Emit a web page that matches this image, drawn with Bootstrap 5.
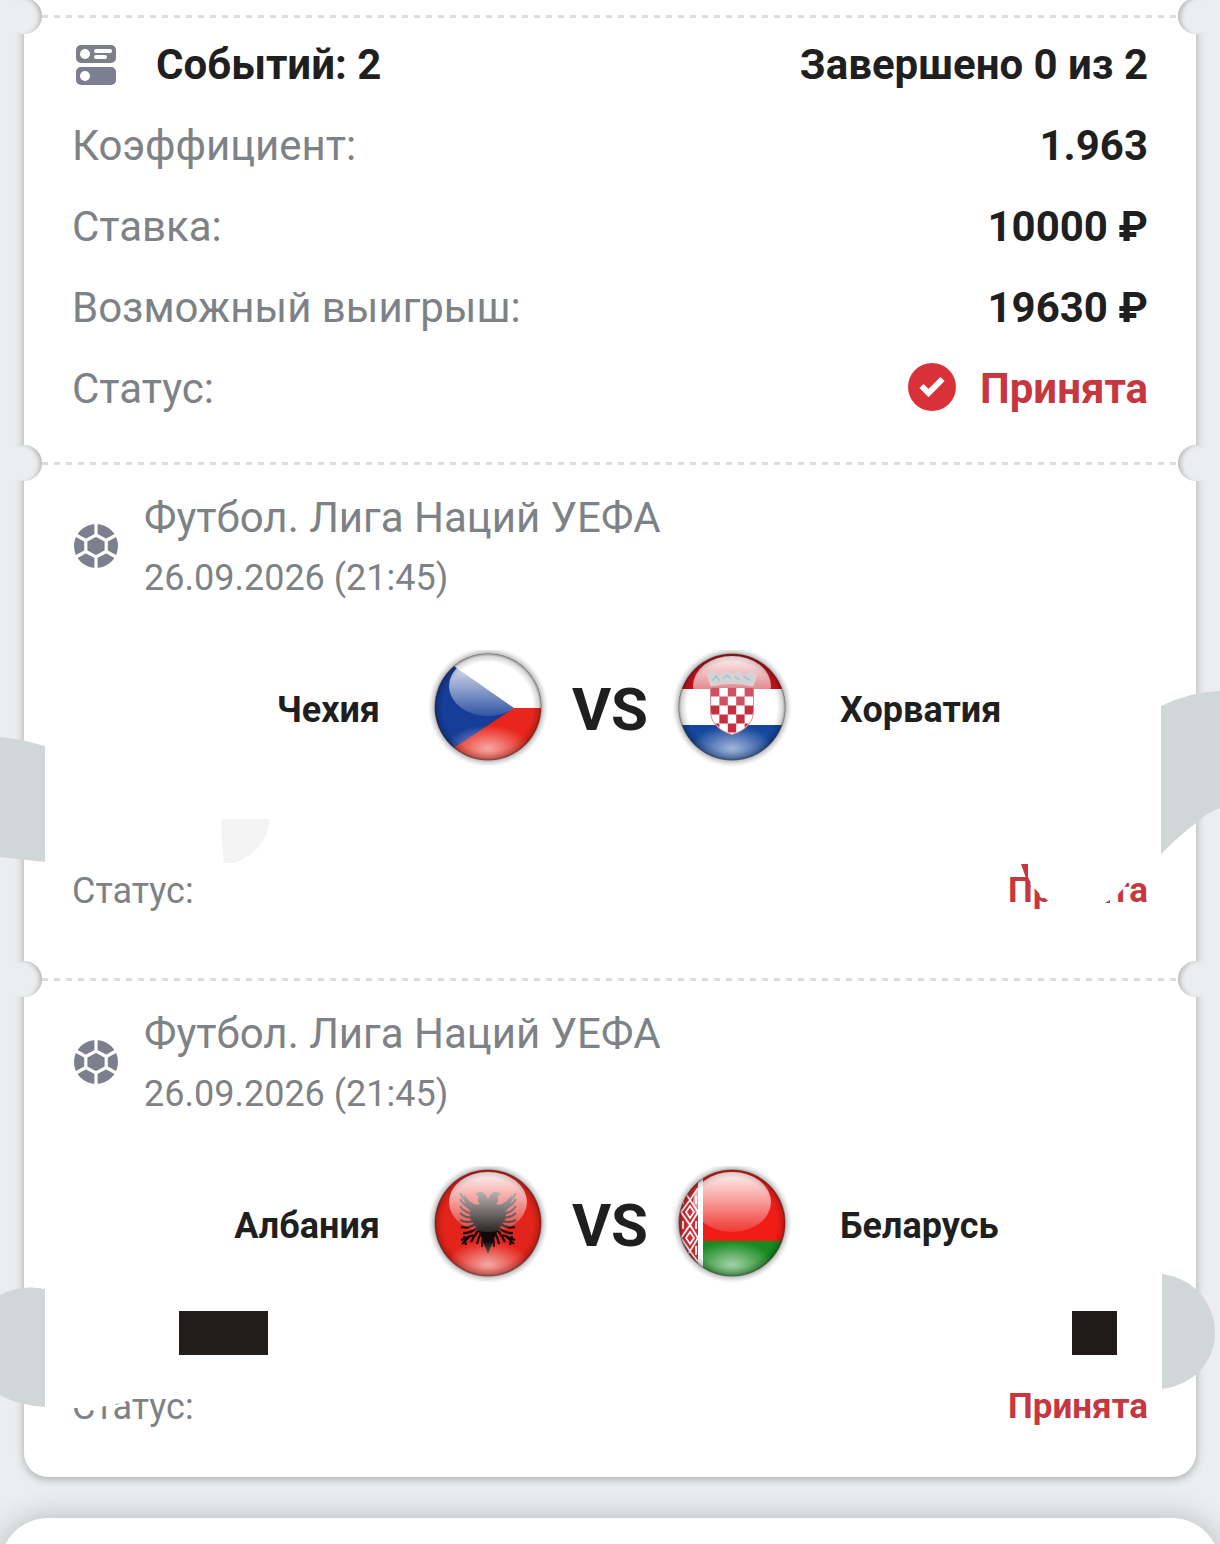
<!DOCTYPE html>
<html lang="ru">
<head>
<meta charset="utf-8">
<meta name="viewport" content="width=device-width, initial-scale=1">
<title>Купон</title>
<link href="https://cdn.jsdelivr.net/npm/bootstrap@5.3.0/dist/css/bootstrap.min.css" rel="stylesheet">
<style>
  body { background: #ebedee; font-family: Roboto, "Noto Sans", sans-serif; font-size: 42px; color: #1f1f1f; }
  .coupon { margin: 0 24px; padding-top: 15px; background: #fff; border-radius: 0 0 24px 24px; box-shadow: 0 2px 8px rgba(60, 66, 70, .4); }
  .tear { position: relative; height: 3px; margin: 0 18px 0 18px; background: repeating-linear-gradient(90deg, #dcdcdc 0 6px, transparent 6px 12px); }
  .tear::before, .tear::after { content: ""; position: absolute; top: -17px; width: 36px; height: 36px; border-radius: 50%; background: #ebedee; }
  .tear::before { left: -36px; box-shadow: inset -5px 1px 5px -3px rgba(0, 0, 0, .25); }
  .tear::after { right: -36px; box-shadow: inset 5px 1px 5px -3px rgba(0, 0, 0, .25); }
  .block { padding: 0 48px; }
  .totals { padding-top: 6px; padding-bottom: 33px; }
  .line { line-height: 81px; }
  .event { position: relative; padding-top: 23px; padding-bottom: 57px; }
  .event:last-child { padding-bottom: 40px; }
  .muted { color: #7d8286; }
  .accepted { color: #c6373f; }
  .sum-icon { margin-right: 36px; }
  .league, .when { line-height: 60px; }
  .when, .side, .state { font-size: 36px; }
  .state .accepted { font-size: 35px; }
  .match { margin-top: 42px; gap: 48px; line-height: 60px; }
  .side { flex: 1 1 0; }
  .versus { width: 124px; font-size: 60px; }
  .state { margin-top: 91px; line-height: 60px; }
  .stain { position: absolute; pointer-events: none; }
  .stain-left { left: -24px; top: 223px; }
  .stain-right { right: -24px; top: 223px; }
  .next { flex: 1 0 67px; height: 67px; padding-top: 41px; overflow: hidden; }
  .sheet { height: 120px; background: #fff; border-radius: 48px 48px 0 0; box-shadow: 0 0 28px rgba(60, 66, 70, .3); }
</style>
<script src="https://cdn.jsdelivr.net/npm/bootstrap@5.3.0/dist/js/bootstrap.bundle.min.js"></script>
</head>
<body class="d-flex flex-column min-vh-100">

<svg width="0" height="0" class="position-absolute" aria-hidden="true">
  <defs>
    <radialGradient id="halo"><stop offset=".84" stop-color="#555" stop-opacity=".75"/><stop offset=".93" stop-color="#888" stop-opacity=".3"/><stop offset="1" stop-color="#aaa" stop-opacity="0"/></radialGradient>
    <radialGradient id="rim"><stop offset=".84" stop-color="#000" stop-opacity="0"/><stop offset=".95" stop-color="#000" stop-opacity=".16"/><stop offset="1" stop-color="#000" stop-opacity=".45"/></radialGradient>
    <linearGradient id="gloss" x1="0" y1="0" x2="0" y2="1"><stop offset="0" stop-color="#fff" stop-opacity=".95"/><stop offset=".5" stop-color="#fff" stop-opacity=".55"/><stop offset="1" stop-color="#fff" stop-opacity=".12"/></linearGradient>
    <radialGradient id="glow" cx=".5" cy=".55" r=".5"><stop offset="0" stop-color="#fff" stop-opacity=".6"/><stop offset="1" stop-color="#fff" stop-opacity="0"/></radialGradient>
    <clipPath id="disc"><circle cx="60" cy="57" r="53"/></clipPath>
    <g id="shine">
      <ellipse cx="60" cy="96" rx="42" ry="23" fill="url(#glow)" clip-path="url(#disc)"/>
      <ellipse cx="60" cy="36" rx="39" ry="30" fill="url(#gloss)"/>
      <circle cx="60" cy="57" r="53.500" fill="url(#rim)"/>
    </g>
    <g id="ball">
      <circle cx="24" cy="24" r="22" fill="#7c808c"/>
      <g fill="none" stroke="#fff" stroke-width="3.200">
        <path d="M24 13l10.200 5.500v11L24 35l-10.200-5.500v-11z"/>
        <path d="M24 13V1M34.200 18.500L46 12M34.200 29.500L46 36M24 35V47M13.800 29.500L2 36M13.800 18.500L2 12"/>
      </g>
    </g>
    <g id="wing">
      <path d="M60 36 C59 30 57 27 53 26 C50 26 49 28 47 28 L51 30 C50 34 50 36 52 38 C49 40 46 39 43 36 L42 52 L49 62 L53 70 L57 80 L60 87z"/>
      <path fill="none" stroke-width="2.200" d="M48 40Q37 37 32 27M48 44Q37 42 32 33M48 48Q37 48 32 40M48 51Q38 53 32 47M49 54Q39 58 32 54M49 57Q41 63 33 61M51 60Q43 68 35 67M52 62Q46 70 43 76M54 65Q50 72 49 78M56 68Q54 76 54 81M33 74l12-5M36 70l2 9M34 78l8-8"/>
      <path d="M42 36l-6-7 1 8 5 8z"/>
    </g>
  </defs>
</svg>

<main class="coupon">
  <div class="tear"></div>

  <section class="block totals">
    <div class="line d-flex align-items-center justify-content-between fw-bold">
      <span class="d-flex align-items-center">
        <svg class="sum-icon" width="48" height="48" viewBox="0 0 48 48" aria-hidden="true">
          <rect x="4" y="4" width="40" height="18" rx="5" fill="#7c8088"/><rect x="4" y="26" width="40" height="18" rx="5" fill="#7b7f91"/>
          <g fill="#fff"><circle cx="13" cy="13" r="5"/><circle cx="13" cy="35" r="5"/><rect x="22" y="8" width="18" height="4" rx="2"/><rect x="22" y="14" width="13" height="4" rx="2"/></g>
        </svg>
        <span>Событий: 2</span>
      </span>
      <span>Завершено 0 из 2</span>
    </div>
    <div class="line d-flex justify-content-between"><span class="muted">Коэффициент:</span><span class="fw-bold">1.963</span></div>
    <div class="line d-flex justify-content-between"><span class="muted">Ставка:</span><span class="fw-bold">10000 ₽</span></div>
    <div class="line d-flex justify-content-between"><span class="muted">Возможный выигрыш:</span><span class="fw-bold">19630 ₽</span></div>
    <div class="line d-flex justify-content-between"><span class="muted">Статус:</span>
      <span class="accepted fw-bold d-flex align-items-center gap-4">
        <svg width="48" height="52" viewBox="0 0 48 52" aria-hidden="true"><circle cx="24" cy="24" r="24" fill="#d83138"/><path d="M13.500 23l7 7L34.500 16" fill="none" stroke="#fff" stroke-width="6"/></svg>
        <span>Принята</span>
      </span>
    </div>
  </section>

  <div class="tear"></div>

  <section class="block event">
    <div class="d-flex align-items-center gap-4 muted">
      <svg class="mb-1" width="48" height="48" viewBox="0 0 48 48" aria-hidden="true"><use href="#ball"/></svg>
      <div><div class="league">Футбол. Лига Наций УЕФА</div><div class="when">26.09.2026 (21:45)</div></div>
    </div>
    <div class="match d-flex align-items-center fw-bold">
      <div class="side text-end">Чехия</div>
      <div class="d-flex align-items-center">
        <svg width="120" height="120" viewBox="0 0 120 120" role="img" aria-label="Чехия">
          <circle cx="60" cy="57" r="60" fill="url(#halo)"/>
          <g clip-path="url(#disc)"><path fill="#fff" d="M0 0h120v58H0z"/><path fill="#e8261c" d="M0 58h120v62H0z"/><path fill="#163d97" d="M0-2l86 60L0 115z"/></g>
          <use href="#shine"/>
        </svg>
        <div class="versus text-center">VS</div>
        <svg width="120" height="120" viewBox="0 0 120 120" role="img" aria-label="Хорватия">
          <circle cx="60" cy="57" r="60" fill="url(#halo)"/>
          <g clip-path="url(#disc)"><path fill="#c4131c" d="M0 0h120v39H0z"/><path fill="#fff" d="M0 39h120v36H0z"/><path fill="#15479d" d="M0 75h120v45H0z"/></g>
          <use href="#shine"/>
          <path fill="#fff" stroke="#d98a94" d="M38.500 37.500h43V61c0 12-9 20-21.500 23.500C47.500 81 38.500 73 38.500 61z"/>
          <clipPath id="crest"><path d="M39 38h42v23c0 12-9 19-21 23-12-4-21-11-21-23z"/></clipPath>
          <g clip-path="url(#crest)" stroke-width="9" fill="none"><path stroke="#cf5262" stroke-dasharray="8.400 8.400" d="M39 42h42M47.400 51h34"/><path stroke="#c62f40" stroke-dasharray="8.400 8.400" d="M39 60h42M47.400 69h34M39 78h42"/></g>
          <path fill="#d3d3d6" stroke="#ecc9cc" d="M39 36l-4-12 7-3 6 4 6-4 6 3 6-3 6 4 7-4 6 4-4 11q-21-5-42 0z"/>
          <path fill="none" stroke="#a3c6c9" stroke-width="1.500" d="M40 31l4-5 4 5M51 29l4-4 4 4M63 27l5 3M71 26l7 4"/>
        </svg>
      </div>
      <div class="side">Хорватия</div>
    </div>
    <div class="state d-flex justify-content-between"><span class="muted">Статус:</span><span class="accepted fw-bold">Принята</span></div>

    <svg class="stain stain-left" width="280" height="190" viewBox="0 688 280 190" aria-hidden="true">
      <path fill="#d1d6d7" d="M0 737l22 3 23 6v116l-45-5z"/><path fill="#f3f3f3" d="M222 819h47c1 18-14 38-36 44h-10c2-15-3-20-1-44z"/>
    </svg>
    <svg class="stain stain-right" width="220" height="230" viewBox="1000 688 220 230" aria-hidden="true">
      <circle cx="1079" cy="854" r="56" fill="#fff"/>
      <path fill="#c6373f" d="M1021 864h7v14l3 10-5-10z"/>
      <path fill="#d1d6d7" d="M1161 706q28-14 59-15v117q-12 4-24 15-15 11-35 31z"/>
      <path fill="#8a5058" d="M1105 903l5-3v3z"/>
    </svg>
  </section>

  <div class="tear"></div>

  <section class="block event">
    <div class="d-flex align-items-center gap-4 muted">
      <svg class="mb-1" width="48" height="48" viewBox="0 0 48 48" aria-hidden="true"><use href="#ball"/></svg>
      <div><div class="league">Футбол. Лига Наций УЕФА</div><div class="when">26.09.2026 (21:45)</div></div>
    </div>
    <div class="match d-flex align-items-center fw-bold">
      <div class="side text-end">Албания</div>
      <div class="d-flex align-items-center">
        <svg width="120" height="120" viewBox="0 0 120 120" role="img" aria-label="Албания">
          <circle cx="60" cy="57" r="60" fill="url(#halo)"/>
          <circle cx="60" cy="57" r="53" fill="#e3241a"/>
          <g fill="#120808" stroke="#120808" stroke-width=".5"><use href="#wing"/><use href="#wing" transform="matrix(-1 0 0 1 120 0)"/></g>
          <use href="#shine"/>
        </svg>
        <div class="versus text-center">VS</div>
        <svg width="120" height="120" viewBox="0 0 120 120" role="img" aria-label="Беларусь">
          <circle cx="60" cy="57" r="60" fill="url(#halo)"/>
          <g clip-path="url(#disc)"><path fill="#f01d17" d="M0 0h120v75H0z"/><path fill="#188a20" d="M0 75h120v45H0z"/><path fill="#fff" d="M0 0h31v120H0z"/><path fill="#d32a33" d="M6 0h20v120H6z"/>
            <path fill="none" stroke="#fff" stroke-width="1.800" d="M26 22L18 34l-8-12M26 46L18 34l-9 12M9 46l9 13 8-13M9 72l9-13 8 13M9 72l9 13 8-13M10 96l8-11 8 11M18 40l4 6-4 6-4-6zM18 66l4 6-4 6-4-6zM24 30v8M24 55v8M24 80v9M11 30v8M11 55v8M11 80v9"/></g>
          <use href="#shine"/>
        </svg>
      </div>
      <div class="side">Беларусь</div>
    </div>
    <div class="state d-flex justify-content-between"><span class="muted">Статус:</span><span class="accepted fw-bold">Принята</span></div>

    <svg class="stain stain-left" width="280" height="220" viewBox="0 1204 280 220" aria-hidden="true">
      <path fill="#d1d6d7" d="M0 1295q22-11 45-6v118q-28-2-45-12z"/><path fill="#211e1c" d="M179 1311h89v44h-89z"/>
      <path fill="#fff" d="M70 1385h70l-8 15-16 4-21 4H70z"/>
    </svg>
    <svg class="stain stain-right" width="160" height="190" viewBox="1060 1204 160 190" aria-hidden="true">
      <path fill="#d1d6d7" d="M1162 1274c32 4 53 30 53 59s-22 52-53 56z"/><path fill="#211c1b" d="M1072 1311h45v44h-45z"/>
    </svg>
  </section>
</main>

<div class="next"><div class="sheet"></div></div>
</body>
</html>
